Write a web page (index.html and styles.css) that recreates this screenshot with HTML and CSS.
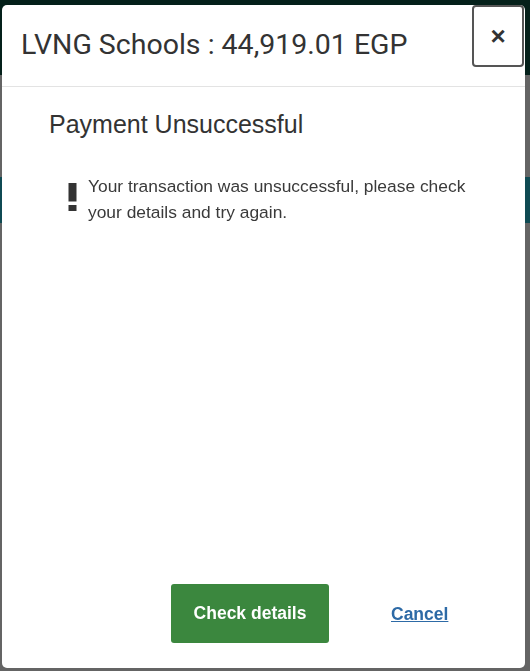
FILE: index.html
```html
<!DOCTYPE html>
<html lang="en">
<head>
  <meta charset="UTF-8" />
  <meta name="viewport" content="width=device-width, initial-scale=1.0"/>
  <title>LVNG Schools - Payment</title>
  <link rel="stylesheet" href="styles.css">
</head>
<body>
  <div class="page">
    <div class="topbar"></div>
    <div class="banner"></div>
  </div>

  <div class="modal">
    <div class="modal-header">
      <h1>LVNG Schools : 44,919.01 EGP</h1>
      <button class="close" type="button" aria-label="Close">&times;</button>
    </div>
    <div class="modal-body">
      <h2>Payment Unsuccessful</h2>
      <div class="message">
        <svg class="alert-icon" width="9" height="28" viewBox="0 0 9 28">
          <rect x="0.5" y="0" width="8" height="18.5" fill="#333"/>
          <rect x="0.5" y="22" width="8" height="6" fill="#333"/>
        </svg>
        <p>Your transaction was unsuccessful, please check your details and try again.</p>
      </div>
    </div>
    <div class="modal-footer">
      <a class="btn-check" href="#">Check details</a>
      <a class="cancel" href="#">Cancel</a>
    </div>
  </div>
</body>
</html>
```

FILE: styles.css
```css
body {
  margin: 0;
  padding: 0;
  background: #646464;
  font-family: "Liberation Sans", Arial, sans-serif;
}
.topbar {
  height: 75px;
  background: #04201a;
}
.banner {
  margin-top: 102px;
  height: 46px;
  background: #0f4a53;
}
.modal {
  position: fixed;
  left: 2px;
  top: 5px;
  width: 523px;
  height: 663px;
  background: #fff;
  border-radius: 5px;
  display: flex;
  flex-direction: column;
}
.modal-header {
  height: 81px;
  border-bottom: 1px solid #e3e3e3;
  display: flex;
  align-items: flex-start;
  padding-left: 19px;
}
.modal-header h1 {
  margin: 0;
  margin-top: 24px;
  font-family: Roboto, "Liberation Sans", sans-serif;
  font-weight: 400;
  font-size: 28.5px;
  line-height: 32px;
  color: #333;
}
.close {
  margin-left: auto;
  margin-right: 1px;
  width: 52px;
  height: 62px;
  border: 2px solid #555;
  border-radius: 4px;
  background: #fff;
  color: #333;
  font-family: "Liberation Sans", Arial, sans-serif;
  font-size: 26px;
  font-weight: bold;
  line-height: 1;
  padding: 0;
  cursor: pointer;
}
.modal-body {
  flex: 1;
  padding: 24px 40px 0 47px;
}
.modal-body h2 {
  margin: 0;
  font-size: 25px;
  font-weight: 400;
  line-height: 26px;
  color: #333;
}
.message {
  display: flex;
  margin-top: 36px;
  padding-left: 19px;
  gap: 11px;
}
.alert-icon {
  flex: none;
  margin-top: 10px;
}
.message p {
  margin: 0;
  font-size: 17.4px;
  line-height: 26px;
  color: #3a3a3a;
}
.modal-footer {
  display: flex;
  align-items: center;
  padding: 0 0 25px 169px;
  gap: 62px;
}
.btn-check {
  display: flex;
  align-items: center;
  justify-content: center;
  width: 158px;
  height: 59px;
  background: #3b873e;
  border-radius: 3px;
  color: #fff;
  font-weight: bold;
  font-size: 17.5px;
  text-decoration: none;
}
.cancel {
  color: #2d6aa6;
  font-weight: bold;
  font-size: 17.5px;
  text-decoration: underline;
  margin-top: 2px;
}
```
